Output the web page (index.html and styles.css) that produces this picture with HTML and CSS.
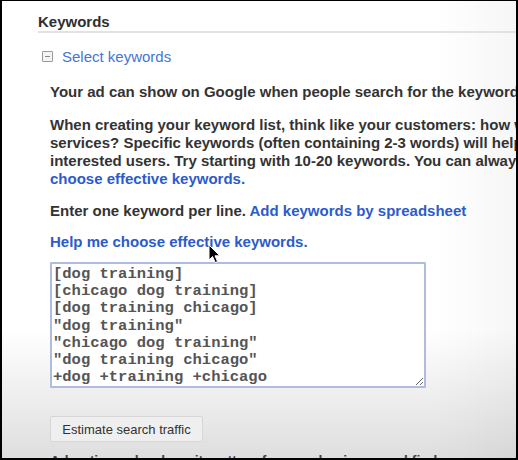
FILE: index.html
```html
<!DOCTYPE html>
<html>
<head>
<meta charset="utf-8">
<link rel="stylesheet" href="styles.css">
</head>
<body>
<div class="frame">
  <div class="content">
    <h2 class="heading">Keywords</h2>
    <div class="toggle">
      <span class="minus"></span>
      <a class="select-link">Select keywords</a>
    </div>
    <div class="body">
      <p class="lead">Your ad can show on Google when people search for the keywords you choose here.</p>
      <p class="para">When creating your keyword list, think like your customers: how would they describe your products<br>services? Specific keywords (often containing 2-3 words) will help you show your ad to<br>interested users. Try starting with 10-20 keywords. You can always add more later. Help me<br><a class="link">choose effective keywords.</a></p>
      <p class="line">Enter one keyword per line. <a class="link">Add keywords by spreadsheet</a></p>
      <p class="line help"><a class="link">Help me choose effective keywords.</a></p>
      <textarea class="kw" spellcheck="false">[dog training]
[chicago dog training]
[dog training chicago]
"dog training"
"chicago dog training"
"dog training chicago"
+dog +training +chicago</textarea>
      <button class="btn">Estimate search traffic</button>
      <p class="cut">Advertise only where it matters for your business and find a new way to reach</p>
    </div>
  </div>
  <svg class="cursor" width="13" height="20" viewBox="0 0 13 20">
    <path d="M1 1 L1 16 L4.6 12.6 L7.2 18.6 L9.6 17.6 L7 11.8 L11.8 11.8 Z" fill="#000" stroke="#fff" stroke-width="1" stroke-linejoin="round"/>
  </svg>
</div>
</body>
</html>
```
FILE: styles.css
```css
html, body {
  margin: 0;
  padding: 0;
  background: #000;
}
.frame {
  position: relative;
  width: 518px;
  height: 460px;
  box-sizing: border-box;
  border: 2px solid #000;
  border-top-width: 1px;
  overflow: hidden;
  background:
    linear-gradient(to bottom, rgba(0,0,0,0) 72%, rgba(0,0,0,0.13) 100%),
    linear-gradient(to right, rgba(0,0,0,0) 84%, rgba(0,0,0,0.035) 100%),
    #fff;
  font-family: "Liberation Sans", Arial, sans-serif;
  color: #333;
}
.content {
  padding: 12px 0 0 36px;
  width: 800px;
}
.heading {
  margin: 0;
  font-size: 15px;
  line-height: 18px;
  font-weight: bold;
  color: #2e2e2e;
  border-bottom: 2px solid #e2e2e2;
}
.toggle {
  display: flex;
  align-items: center;
  margin-top: 15px;
  height: 18px;
  padding-left: 4px;
}
.minus {
  position: relative;
  width: 9px;
  height: 9px;
  border: 1px solid #9a9a9a;
  border-radius: 1px;
  background: #f4f4f4;
  margin-right: 9px;
  margin-top: -1px;
}
.minus::after {
  content: "";
  position: absolute;
  left: 2px;
  right: 2px;
  top: 4px;
  height: 1px;
  background: #888;
}
.select-link {
  font-size: 15px;
  line-height: 18px;
  color: #4675d2;
}
.body {
  padding-left: 12px;
}
.body p {
  margin: 0;
  font-size: 15px;
  line-height: 18px;
  font-weight: bold;
  white-space: nowrap;
}
.lead {
  margin-top: 17px !important;
}
.para {
  margin-top: 15px !important;
}
.line {
  margin-top: 14px !important;
}
.line.help {
  margin-top: 13px !important;
}
.link {
  color: #2c5bcc;
}
.kw {
  display: block;
  margin-top: 11px;
  width: 376px;
  height: 126px;
  box-sizing: border-box;
  border: 2px solid #aebce0;
  border-radius: 1px;
  padding: 2px 1px;
  font-family: "Liberation Mono", "Courier New", monospace;
  font-size: 15.5px;
  line-height: 17.2px;
  font-weight: bold;
  color: #555;
  background: #fff;
  resize: both;
  overflow: hidden;
  outline: none;
}
.btn {
  display: block;
  margin-top: 28px;
  height: 26px;
  width: 153px;
  padding: 0;
  border: 1px solid #d6d6d6;
  border-radius: 2px;
  background: #efefef;
  font-family: "Liberation Sans", Arial, sans-serif;
  font-size: 13px;
  color: #333;
}
.body p.cut {
  margin-top: 10px;
  font-size: 14px;
  color: #444;
}
.cursor {
  position: absolute;
  left: 206px;
  top: 243px;
}
```
